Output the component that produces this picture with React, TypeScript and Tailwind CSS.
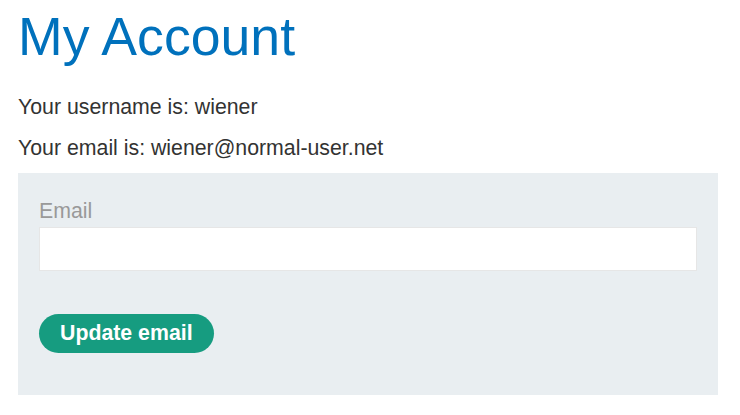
export default function App() {
  return (
    <div className="min-h-[415px] bg-white px-[18px] font-['Liberation_Sans',Arial,sans-serif] text-[#333332]">
      <h1 className="pt-[4px] text-[53.6px] leading-[64px] text-[#0071bc]">My Account</h1>
      <p className="mt-[27px] text-[21.3px] leading-[24px]">Your username is: wiener</p>
      <p className="mt-[17px] text-[21.3px] leading-[24px]">Your email is: wiener@normal-user.net</p>
      <form className="mt-[13px] w-[700px] bg-[#e9eef1] px-[21px] pb-[42px] pt-[26px]">
        <label className="block text-[21.3px] leading-[24px] text-[#999999]">Email</label>
        <input type="email" className="mt-[4px] block h-[44px] w-[658px] border border-[#e6e6e6] bg-white px-2" />
        <button
          type="button"
          className="mt-[43px] h-[39px] rounded-full bg-[#169c80] px-[21px] text-[21.3px] font-bold text-white"
        >
          Update email
        </button>
      </form>
    </div>
  );
}
